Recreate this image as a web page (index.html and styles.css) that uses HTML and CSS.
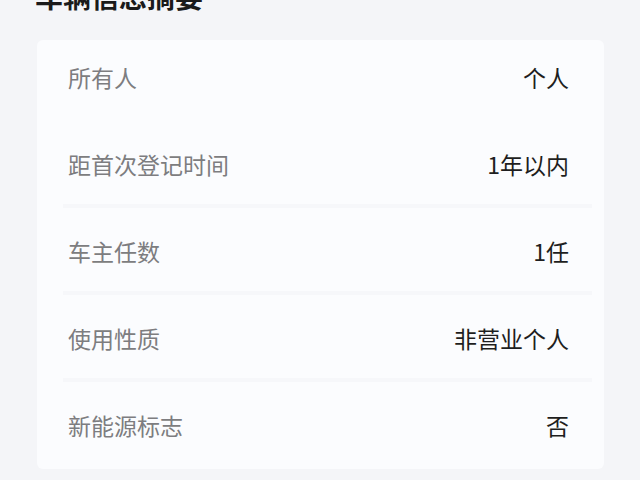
FILE: index.html
```html
<!DOCTYPE html>
<html lang="zh-CN">
<head>
  <meta charset="utf-8">
  <link rel="stylesheet" href="styles.css">
</head>
<body>
  <div class="page">
    <h2 class="section-title">车辆信息摘要</h2>
    <div class="info-card">
      <div class="info-row first">
        <span class="label">所有人</span>
        <span class="value">个人</span>
      </div>
      <div class="info-row">
        <span class="label">距首次登记时间</span>
        <span class="value">1年以内</span>
      </div>
      <div class="info-row">
        <span class="label">车主任数</span>
        <span class="value">1任</span>
      </div>
      <div class="info-row">
        <span class="label">使用性质</span>
        <span class="value">非营业个人</span>
      </div>
      <div class="info-row last">
        <span class="label">新能源标志</span>
        <span class="value">否</span>
      </div>
    </div>
  </div>
</body>
</html>
```

FILE: styles.css
```css
:root {
  --bg: #f4f5f8;
  --card-bg: #fbfcfe;
  --label: #7d7d80;
  --value: #1e1e20;
  --divider: #f6f7fa;
}

* {
  box-sizing: border-box;
}

body {
  margin: 0;
  background-color: var(--bg);
  font-family: "Noto Sans CJK SC", "Noto Sans", sans-serif;
  overflow: hidden;
}

.page {
  padding: 0 36px 0 37px;
}

.section-title {
  margin: -19px 0 0 -2px;
  font-size: 28px;
  line-height: 30px;
  font-weight: 700;
  color: #1a1a1a;
}

.info-card {
  margin-top: 29px;
  width: 567px;
  background-color: var(--card-bg);
  border-radius: 6px;
}

.info-row {
  position: relative;
  display: flex;
  justify-content: space-between;
  align-items: center;
  height: 87px;
  padding: 0 35px 2px 31px;
  font-size: 23px;
}

.info-row.first {
  height: 81px;
  padding-bottom: 8px;
}

.info-row::after {
  content: '';
  position: absolute;
  left: 26px;
  right: 12px;
  bottom: 0;
  height: 4px;
  background-color: var(--divider);
}

.info-row.first::after,
.info-row.last::after {
  display: none;
}

.label {
  color: var(--label);
}

.value {
  color: var(--value);
}
```
